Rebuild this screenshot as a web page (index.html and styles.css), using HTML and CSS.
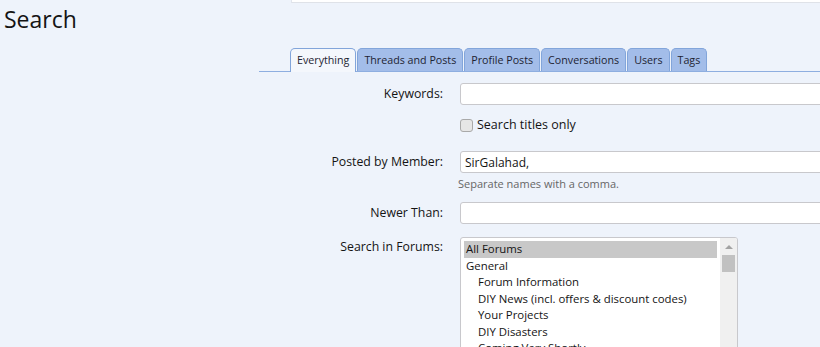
FILE: index.html
```html
<!DOCTYPE html>
<html lang="en">
<head>
	<meta charset="UTF-8">
	<title>Search</title>
	<link rel="stylesheet" href="styles.css">
</head>
<body>
<div class="topbox"></div>
<h1 class="title">Search</h1>

<ul class="tabs">
	<li class="tab active">Everything</li>
	<li class="tab">Threads and Posts</li>
	<li class="tab">Profile Posts</li>
	<li class="tab">Conversations</li>
	<li class="tab">Users</li>
	<li class="tab">Tags</li>
</ul>

<form class="search">
	<div class="row">
		<label class="label">Keywords:</label>
		<div class="field"><input class="text" type="text"></div>
	</div>
	<div class="row check">
		<span></span>
		<label class="field option"><span class="box"></span>Search titles only</label>
	</div>
	<div class="row member">
		<label class="label">Posted by Member:</label>
		<div class="field">
			<input class="text" type="text" value="SirGalahad,">
			<p class="hint">Separate names with a comma.</p>
		</div>
	</div>
	<div class="row">
		<label class="label">Newer Than:</label>
		<div class="field"><input class="text" type="text"></div>
	</div>
	<div class="row forums">
		<label class="label">Search in Forums:</label>
		<div class="field">
			<div class="listbox">
				<ul class="options">
					<li class="selected">All Forums</li>
					<li>General</li>
					<li class="sub">Forum Information</li>
					<li class="sub">DIY News (incl. offers &amp; discount codes)</li>
					<li class="sub">Your Projects</li>
					<li class="sub">DIY Disasters</li>
					<li class="sub">Coming Very Shortly</li>
				</ul>
				<div class="scrollbar">
					<span class="arrow"></span>
					<span class="thumb"></span>
				</div>
			</div>
		</div>
	</div>
</form>
</body>
</html>
```

FILE: styles.css
```css
body{
	margin: 0;
	background: #eef3fb;
	color: #141414;
	font-family: "Open Sans", "Noto Sans", sans-serif;
	font-size: 12px;
	overflow: hidden;
}
.topbox{
	margin-left: 291px;
	height: 2px;
	background: #fff;
	border-left: 1px solid #e2e6ee;
	border-bottom: 1px solid #dfe2e8;
}
.title{
	margin: 0 0 0 4px;
	height: 45px;
	font-size: 23px;
	font-weight: normal;
	line-height: 32px;
	color: #141414;
}

/* tabs */
.tabs{
	display: flex;
	margin: 0 0 0 259px;
	padding: 0 0 0 31px;
	list-style: none;
	border-bottom: 1px solid #8eaee0;
	height: 23px;
}
.tab{
	height: 22px;
	line-height: 22px;
	padding: 0 6px;
	margin-right: 1px;
	background: #a3bde9;
	border: 1px solid #82a5da;
	border-bottom: none;
	border-radius: 5px 5px 0 0;
	font-size: 10.7px;
	color: #1e2433;
}
.tab.active{
	background: #f4f7fc;
	height: 23px;
}

/* form */
.search{
	margin-top: 11px;
}
.row{
	display: grid;
	grid-template-columns: 443px 1fr;
	column-gap: 17px;
	align-items: start;
	margin-bottom: 10px;
}
.label{
	text-align: right;
	font-size: 12.3px;
	line-height: 22px;
}
.text{
	box-sizing: border-box;
	width: 390px;
	height: 22px;
	margin: 0;
	padding: 0 4px;
	background: #fff;
	border: 1px solid #c8c8cc;
	border-radius: 3px;
	font-family: inherit;
	font-size: 12px;
	color: #141414;
}
.check{
	margin-bottom: 16px;
}
.option{
	display: flex;
	align-items: center;
	font-size: 12.5px;
	line-height: 20px;
}
.box{
	width: 11px;
	height: 11px;
	margin-right: 4px;
	background: #e6e6e6;
	border: 1px solid #a9a9a9;
	border-radius: 3px;
}
.hint{
	margin: 4px 0 0 -2px;
	font-size: 11px;
	color: #666;
	line-height: 14px;
}
.member{
	margin-bottom: 11px;
}
.forums{
	margin-top: 13px;
}
.forums .label{
	line-height: 20px;
}

/* forum list */
.listbox{
	display: flex;
	width: 276px;
	height: 140px;
	background: #fff;
	border: 1px solid #c8c8cc;
	border-radius: 3px 3px 0 0;
	overflow: hidden;
}
.options{
	flex: 1;
	margin: 0;
	padding: 3px 3px 0 3px;
	list-style: none;
	font-size: 11.4px;
}
.options li{
	height: 16.5px;
	line-height: 16.5px;
	padding-left: 2px;
	white-space: nowrap;
}
.options li.selected{
	background: #c8c8c8;
}
.options li.sub{
	padding-left: 14px;
}
.scrollbar{
	position: relative;
	width: 17px;
	background: #f0f0f0;
}
.arrow{
	position: absolute;
	left: 5px;
	top: 7px;
	border-left: 4px solid transparent;
	border-right: 4px solid transparent;
	border-bottom: 4px solid #a3a3a3;
}
.thumb{
	position: absolute;
	left: 2px;
	top: 17px;
	width: 13px;
	height: 17px;
	background: #c1c1c1;
}
```
